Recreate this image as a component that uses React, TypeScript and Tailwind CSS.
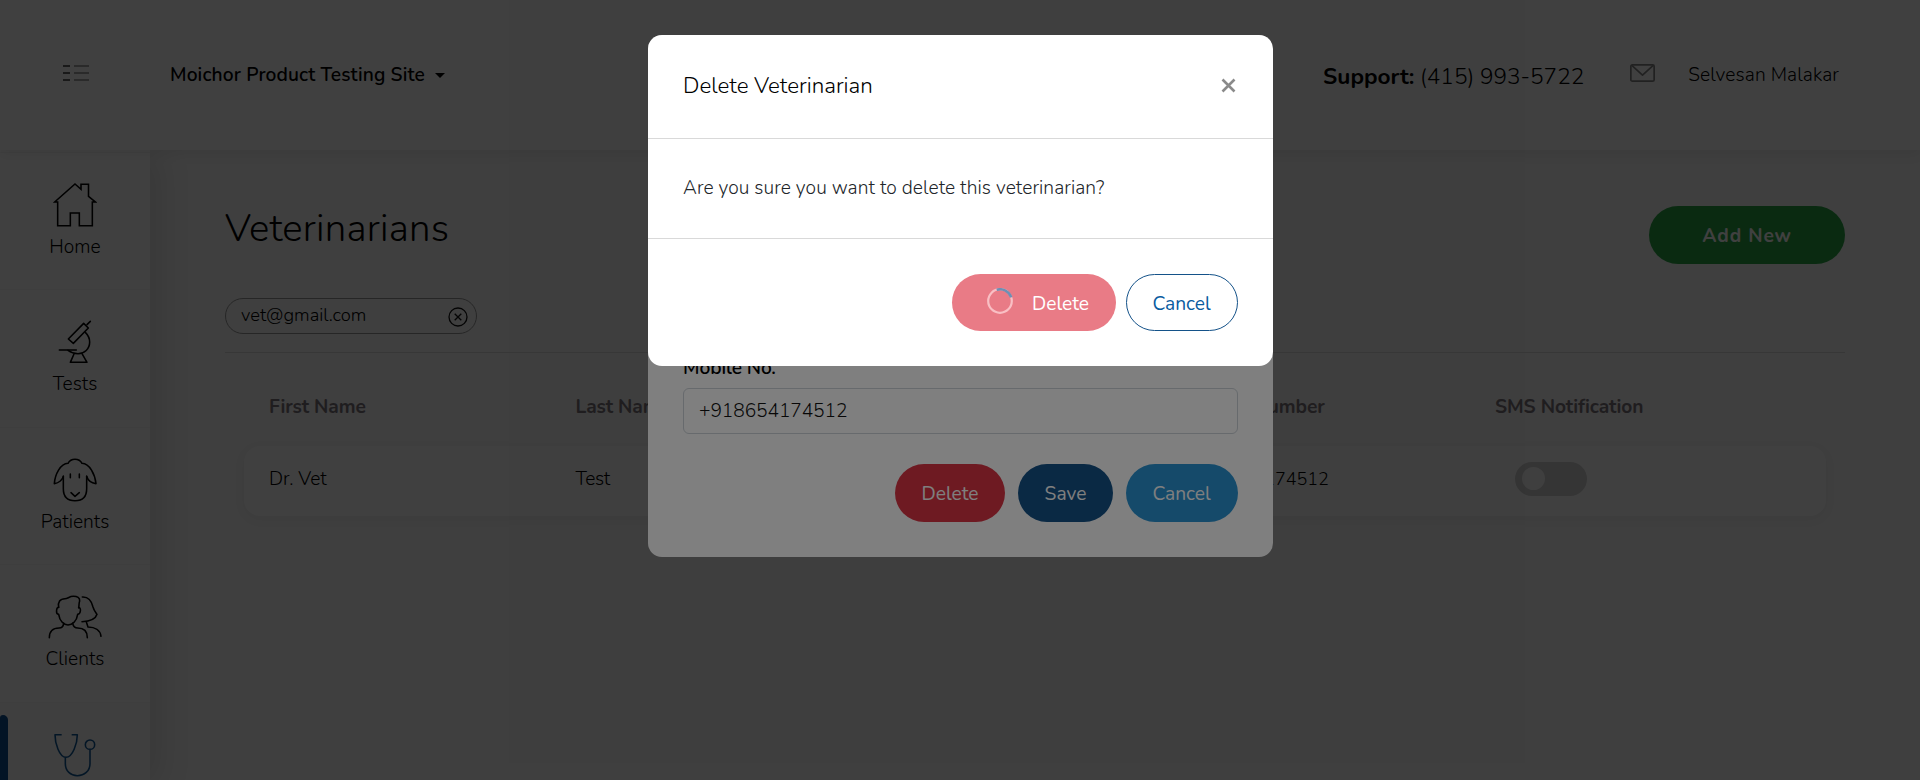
import type { ReactNode } from "react";

const iconProps = {
  fill: "none",
  stroke: "currentColor",
  strokeWidth: 4.7,
  strokeLinejoin: "round" as const,
  strokeLinecap: "round" as const,
};

function HomeIcon() {
  return (
    <svg viewBox="0 0 132 135" className="h-[45px] w-[44px]" {...iconProps} strokeLinejoin="miter" strokeLinecap="butt">
      <path d="M66 6 84 22V6.500H106.500V43L127 60H118V131.500H79V93H52V131.500H14V60H5Z" />
    </svg>
  );
}

function MicroscopeIcon() {
  return (
    <svg viewBox="0 0 132 135" className="h-[45px] w-[44px]" {...iconProps}>
      <path d="M92 13 106 27 61 73 46 60Z" />
      <path d="M102 17 112 7" />
      <path d="M97 40C106 49 110 58 110 69C110 90 94 104 75 104C63 104 53 100 45 94" />
      <path d="M19 93H70" />
      <path d="M63 105 52 130H102L87 104" />
    </svg>
  );
}

function SheepIcon() {
  return (
    <svg viewBox="0 0 132 135" className="h-[45px] w-[44px]" {...iconProps}>
      <path d="M31 58C29 68 18 78 4 80C6 52 22 20 45 19C54 3 78 3 87 19C110 20 126 52 129 80C114 78 104 68 101 58" />
      <path d="M31 58V95C31 119 44 131 66 131C88 131 101 119 101 95V58" />
      <path d="M52 51V62M79 51V62M54 107 66 118 79 107" />
    </svg>
  );
}

function PeopleIcon() {
  return (
    <svg viewBox="0 0 162 135" className="h-[45px] w-[54px]" {...iconProps}>
      <path d="M32 40C29 24 36 14 51 14C59 14 64 7 76 7C88 7 96 11 95 21C92 28 94 33 92 41" />
      <path d="M32 40C25 40 22 60 32 61C35 82 48 93 60 93C73 93 86 82 89 61C99 60 100 40 92 41" />
      <path d="M47 88C46 98 41 102 33 102C14 102 4 113 4 131" />
      <path d="M74 88C76 98 80 102 89 102C108 102 118 113 118 131" />
      <path d="M103 9C122 8 131 22 135 39C138 50 142 54 147 61C143 75 127 82 102 83" />
      <path d="M115 84 120 99C141 99 157 109 159 127" />
    </svg>
  );
}

function StethoscopeIcon() {
  return (
    <svg viewBox="0 0 132 135" className="h-[45px] w-[44px]" {...iconProps} strokeLinecap="butt">
      <path d="M26 8H6C6 34 19 76 39 76C59 76 73 34 73 8H56" />
      <path d="M37 76V95C37 117 53 131 73 131C94 131 111 117 111 95V53" />
      <circle cx="111" cy="38" r="14" />
    </svg>
  );
}

function NavItem({ icon, label, active = false }: { icon: ReactNode; label: string; active?: boolean }) {
  return (
    <a
      className={
        active
          ? "relative flex h-[137.6px] shrink-0 flex-col items-center border-t border-[#f6f6f6] bg-[#f9f9f9] pt-[29px] text-[#0f5796]"
          : "relative flex h-[137.6px] shrink-0 flex-col items-center border-t border-[#f6f6f6] pt-[29px] text-black"
      }
    >
      {active && <span className="absolute left-0 top-[12px] h-[120px] w-2 rounded-tr-[5px] rounded-tl-[3px] bg-[#0d4f92]" />}
      {icon}
      <span className="mt-[6px] text-[19.2px] leading-[28px] font-light">{label}</span>
    </a>
  );
}

function Header() {
  return (
    <header className="relative z-20 flex h-[150px] shrink-0 items-center bg-white pb-[2px] shadow-[0_4px_12px_rgba(0,0,0,0.07)]">
      <svg viewBox="0 0 26 18" className="mb-[4px] ml-[63px] h-[18px] w-[26px]" fill="none" strokeWidth="1.8">
        <path d="M0 3H7M0 10H7M0 17H7" stroke="#666" />
        <path d="M11 3H26M11 10H26M11 17H26" stroke="#a6a6a6" />
      </svg>
      <button className="ml-[81px] flex items-center pt-[1px] text-[19.2px] leading-7 font-semibold tracking-[0.13px] text-black">
        Moichor Product Testing Site
        <span className="mt-[2px] ml-[10px] border-x-[5px] border-t-[5px] border-x-transparent border-t-black" />
      </button>
      <div className="ml-auto flex items-center">
        <div className="mt-[5px] text-[22.6px] leading-8 font-light text-black">
          <strong className="font-bold">Support:</strong> (415) 993-5722
        </div>
        <svg viewBox="0 0 25 18" className="mb-[2px] ml-[46px] h-[18px] w-[25px]" fill="none" stroke="#858585" strokeWidth="1.7" strokeLinejoin="round">
          <rect x="0.850" y="0.850" width="23.300" height="16.300" rx="1.500" />
          <path d="M1.500 1.200 12.500 11.200 23.500 1.200" />
        </svg>
        <span className="mr-[81px] ml-[33px] pt-[1px] text-[19.2px] leading-7 font-light tracking-[0.1px] text-black">Selvesan Malakar</span>
      </div>
    </header>
  );
}

function VeterinarianList() {
  return (
    <main className="flex-1 bg-[#f9f9f9] pt-[54px] pr-[75px] pl-[75px]">
      <div className="flex h-[60px] items-start justify-between">
        <h1 className="mt-[1px] text-[38.4px] leading-[48px] font-light tracking-[0.2px] text-black">Veterinarians</h1>
        <button className="mt-[2px] h-[58px] w-[196px] rounded-full bg-[#28a745] pt-[2px] text-[19.2px] leading-[56px] font-bold tracking-[0.9px] text-white">
          Add New
        </button>
      </div>
      <div className="mt-[34px] flex h-9 w-[252px] items-center justify-between rounded-full border border-[#999] pr-[8px] pl-[15px]">
        <span className="pb-[3px] text-[18.4px] leading-7 font-light text-black">vet@gmail.com</span>
        <svg viewBox="0 0 20 20" className="mt-[1px] h-5 w-5" fill="none" stroke="#111" strokeWidth="1.300">
          <circle cx="10" cy="10" r="9" />
          <path d="M6.700 6.700 13.300 13.300M13.300 6.700 6.700 13.300" />
        </svg>
      </div>
      <hr className="mt-[18px] border-t border-[#dcdcdc]" />
      <div className="mt-10 grid grid-cols-[306.5px_306.5px_306.5px_306.5px_1fr] pl-[44px] text-[19.2px] leading-7 font-bold tracking-[-0.1px] text-[#7e767c]">
        <span>First Name</span>
        <span>Last Name</span>
        <span>Email</span>
        <span>Mobile Number</span>
        <span>SMS Notification</span>
      </div>
      <div className="mt-[25px] mr-[19px] ml-[19px] grid h-[70px] grid-cols-[306.5px_306.5px_306.5px_306.5px_1fr] items-center rounded-[16px] bg-white pl-[25px] text-[19.2px] leading-7 font-light text-black shadow-[0_3px_12px_rgba(0,0,0,0.05)]">
        <span className="pb-[5px]">Dr. Vet</span>
        <span className="pb-[5px] tracking-[-0.3px]">Test</span>
        <span className="pb-[5px] text-[18px]">vet@gmail.com</span>
        <span className="pb-[5px] text-[18px]">+918654174512</span>
        <span className="mb-[4px] ml-[20px] flex h-[34px] w-[72px] items-center rounded-full bg-[#d2d2d2] pb-[2px] pl-[7px]">
          <span className="h-[23px] w-[23px] rounded-full bg-[#fbfbfb]" />
        </span>
      </div>
    </main>
  );
}

function EditDialog() {
  return (
    <div className="fixed inset-0 z-30 flex items-start justify-center bg-black/50 pt-[35px] pl-[1px]">
      <section className="flex h-[522px] w-[625px] flex-col justify-end rounded-[14px] bg-white px-[35px] pb-[35px]">
        <label className="text-[19.2px] leading-7 font-semibold tracking-[-0.1px] text-black">Mobile No.</label>
        <input
          readOnly
          value="+918654174512"
          className="mt-[6px] h-[46px] w-full rounded-[6px] border border-[#ced4da] px-[15px] text-[19.2px] leading-7 font-[350] tracking-[-0.1px] text-[#111] outline-none"
        />
        <div className="mt-[30px] flex justify-end text-[19.2px] font-[370] text-white">
          <button className="h-[58px] w-[110px] rounded-full bg-[#dc3545] pt-[3px]">Delete</button>
          <button className="ml-[13px] h-[58px] w-[95px] rounded-full bg-[#145289] pt-[3px]">Save</button>
          <button className="ml-[13px] h-[58px] w-[112px] rounded-full bg-[#2a95d5] pt-[3px] pr-[1px]">Cancel</button>
        </div>
      </section>
    </div>
  );
}

function ConfirmDialog() {
  return (
    <div className="fixed inset-0 z-40 flex items-start justify-center bg-black/50 pt-[35px] pl-[1px]">
      <section className="w-[625px] rounded-[14px] bg-white">
        <div className="flex h-[104px] items-center justify-between border-b border-[#d9d9d9] pr-[37px] pb-[1px] pl-[35px]">
          <h2 className="text-[22.4px] leading-8 font-light text-black">Delete Veterinarian</h2>
          <svg viewBox="0 0 15 15" className="mb-[2px] h-[15px] w-[15px]" fill="none" stroke="#8a8a8a" strokeWidth="2.600">
            <path d="M1.500 1.500 13.500 13.500M13.500 1.500 1.500 13.500" />
          </svg>
        </div>
        <p className="flex h-[100px] items-center border-b border-[#d9d9d9] px-[35px] pb-[2px] text-[19.2px] leading-7 font-[350] tracking-[0.065px] text-[#212529]">
          Are you sure you want to delete this veterinarian?
        </p>
        <div className="flex justify-end px-[35px] pt-[35px] pb-[35px] text-[19.2px] font-[370]">
          <button className="flex h-[57px] w-[164px] items-center rounded-full bg-[#e97b86] pl-[35px] text-white">
            <svg viewBox="0 0 26 26" className="-mt-[3px] h-[26px] w-[26px]" fill="none" strokeWidth="2.2">
              <circle cx="13" cy="13" r="11.800" stroke="#f9bfc4" />
              <path d="M9.700 1.700A11.800 11.800 0 0 1 24.200 9.400" stroke="#6f8fb3" strokeWidth="2.500" />
            </svg>
            <span className="ml-[19px] pt-[3px]">Delete</span>
          </button>
          <button className="ml-[10px] h-[57px] w-[112px] rounded-full border border-[#145289] pt-[3px] pr-[1px] text-[#0a5ca0]">Cancel</button>
        </div>
      </section>
    </div>
  );
}

export default function App() {
  return (
    <div className="flex h-[780px] w-full flex-col overflow-hidden bg-white font-['Nunito','Noto_Sans',sans-serif]">
      <Header />
      <div className="flex min-h-0 flex-1">
        <nav className="relative z-10 flex w-[150px] shrink-0 flex-col bg-white pt-[1.600px] shadow-[8px_4px_32px_rgba(0,0,0,0.12)]">
          <NavItem icon={<HomeIcon />} label="Home" />
          <NavItem icon={<MicroscopeIcon />} label="Tests" />
          <NavItem icon={<SheepIcon />} label="Patients" />
          <NavItem icon={<PeopleIcon />} label="Clients" />
          <NavItem icon={<StethoscopeIcon />} label="Veterinarians" active />
        </nav>
        <VeterinarianList />
      </div>
      <EditDialog />
      <ConfirmDialog />
    </div>
  );
}
